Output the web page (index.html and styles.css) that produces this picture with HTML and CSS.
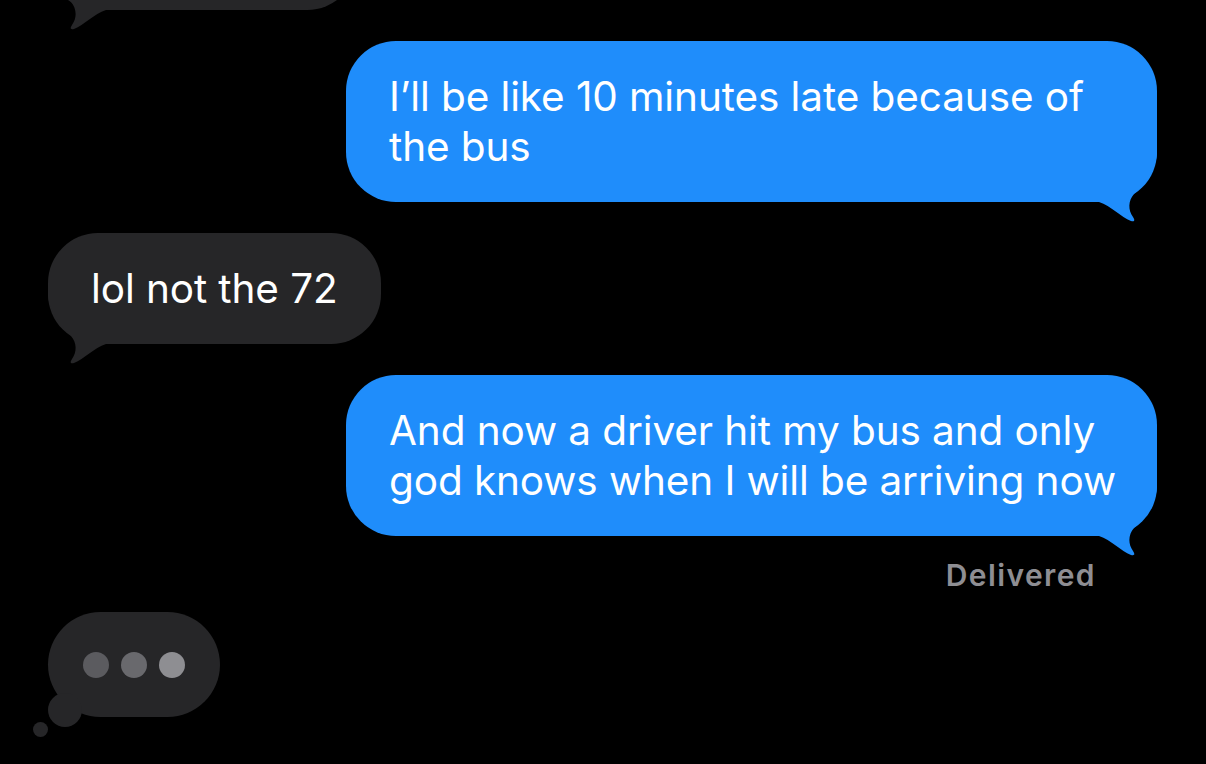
FILE: index.html
```html
<!DOCTYPE html>
<html lang="en">
<head>
    <meta charset="UTF-8">
    <meta name="viewport" content="width=device-width, initial-scale=1.0">
    <title>Messages</title>
    <link rel="stylesheet" href="styles.css">
</head>
<body>
    <svg class="sprite" aria-hidden="true">
        <symbol id="tail" viewBox="0 0 62 72">
            <path d="M62 0 L62 4 C61 18 50 32 39 44 C33 51 33 60 38 67 C40 70 40 72 36 71 C26 67 16 56 4 52 L0 52 L0 0 Z"/>
        </symbol>
    </svg>

    <div class="thread">
        <div class="bubble incoming clipped">
            &nbsp;
            <svg class="tail"><use href="#tail"/></svg>
        </div>

        <div class="bubble outgoing">
            I’ll be like 10 minutes late because of the bus
            <svg class="tail"><use href="#tail"/></svg>
        </div>

        <div class="bubble incoming">
            lol not the 72
            <svg class="tail"><use href="#tail"/></svg>
        </div>

        <div class="bubble outgoing">
            And now a driver hit my bus and only god knows when I will be arriving now
            <svg class="tail"><use href="#tail"/></svg>
        </div>

        <div class="status">Delivered</div>

        <div class="typing">
            <span class="dot dot-1"></span>
            <span class="dot dot-2"></span>
            <span class="dot dot-3"></span>
        </div>
    </div>
</body>
</html>
```

FILE: styles.css
```css
html, body {
    height: 100%;
}

body {
    margin: 0;
    background-color: #000;
    font-family: Inter, "Noto Sans", sans-serif;
    color: #fff;
    overflow: hidden;
}

.sprite {
    display: none;
}

.thread {
    display: flex;
    flex-direction: column;
    gap: 31px;
    padding: 0 49px 0 48px;
    margin-top: -101px;
}

.bubble {
    position: relative;
    isolation: isolate;
    box-sizing: border-box;
    max-width: 811px;
    padding: 31px 38px 30px 43px;
    border-radius: 50px;
    font-size: 40.5px;
    line-height: 50px;
    letter-spacing: -0.1px;
}

.bubble.incoming {
    align-self: flex-start;
    padding-right: 43px;
    background-color: #262628;
    fill: #262628;
}

.bubble.outgoing {
    align-self: flex-end;
    background-color: #1f8dfb;
    fill: #1f8dfb;
}

.bubble.clipped {
    width: 309px;
}

.tail {
    position: absolute;
    z-index: -1;
    bottom: -20px;
    width: 62px;
    height: 72px;
}

.outgoing .tail {
    right: 0;
}

.incoming .tail {
    left: 0;
    transform: scaleX(-1);
}

.status {
    align-self: flex-end;
    margin: -7px 61px -9px 0;
    font-size: 30px;
    line-height: 30px;
    font-weight: 600;
    letter-spacing: 1.4px;
    color: #8e8e93;
}

.typing {
    position: relative;
    align-self: flex-start;
    display: flex;
    align-items: center;
    justify-content: center;
    gap: 12px;
    width: 172px;
    height: 105px;
    border-radius: 53px;
    background-color: #262628;
}

.typing::before,
.typing::after {
    content: "";
    position: absolute;
    border-radius: 50%;
    background-color: #262628;
}

.typing::before {
    left: 0;
    top: 81px;
    width: 34px;
    height: 34px;
}

.typing::after {
    left: -15px;
    top: 110px;
    width: 15px;
    height: 15px;
}

.dot {
    width: 26px;
    height: 26px;
    border-radius: 50%;
}

.dot-1 {
    background-color: #5b5b5f;
}

.dot-2 {
    background-color: #69696d;
}

.dot-3 {
    background-color: #8e8e92;
}
```
